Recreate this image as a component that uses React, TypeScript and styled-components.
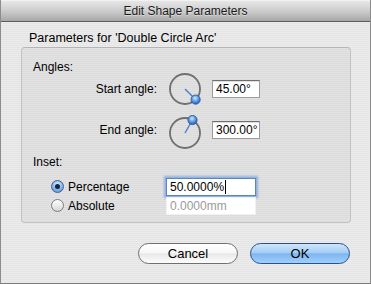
import React from "react";
import styled, { createGlobalStyle, css } from "styled-components";

const GlobalStyle = createGlobalStyle`
  html, body {
    margin: 0;
    padding: 0;
    background: #ffffff;
  }
  body {
    font-family: "Liberation Sans", Arial, sans-serif;
    color: #000;
  }
  * {
    box-sizing: border-box;
  }
`;

const Window = styled.div`
  width: 371px;
  height: 284px;
  display: flex;
  flex-direction: column;
  border-left: 1px solid #8c8c8c;
  border-right: 1px solid #8c8c8c;
  border-bottom: 1px solid #7a7a7a;
  background: repeating-linear-gradient(
    0deg,
    #ebebeb 0px,
    #ebebeb 1px,
    #e5e5e5 1px,
    #e5e5e5 2px
  );
`;

const TitleBar = styled.div`
  height: 22px;
  flex: none;
  border-bottom: 1px solid #5c5c5c;
  border-top: 1px solid #f2f2f2;
  background: linear-gradient(#e6e6e6 0%, #cfcfcf 45%, #a8a8a8 100%);
  display: flex;
  align-items: center;
  justify-content: center;
  font-size: 12px;
  color: #1a1a1a;
  text-shadow: 0 1px 0 rgba(255, 255, 255, 0.45);
`;

const Content = styled.div`
  flex: 1;
  display: flex;
  flex-direction: column;
  padding: 0 19px 0 20px;
`;

const GroupTitle = styled.div`
  margin-top: 9px;
  margin-left: 8px;
  font-size: 12.5px;
  line-height: 15px;
  height: 16px;
`;

const GroupBox = styled.div`
  display: flex;
  flex-direction: column;
  border: 1px solid #c2c2c2;
  border-top-color: #b4b4b4;
  border-radius: 4px;
  background: rgba(0, 0, 0, 0.035);
  padding: 12px 0 7px 11px;
`;

const SectionLabel = styled.div<{ $gap?: number }>`
  font-size: 12px;
  line-height: 14px;
  margin-top: ${({ $gap }) => $gap ?? 0}px;
`;

const AngleGrid = styled.div`
  display: grid;
  grid-template-columns: 124px 55px 48px;
  grid-auto-rows: 30px;
  row-gap: 11px;
  align-items: center;
`;

const AngleLabel = styled.div`
  font-size: 12px;
  text-align: right;
`;

const DialBox = styled.div<{ $shift: number }>`
  width: 36px;
  height: 36px;
  margin-left: 10px;
  transform: translateY(${({ $shift }) => $shift}px);
  svg {
    display: block;
  }
`;

const fieldBase = css`
  height: 18px;
  display: flex;
  align-items: center;
  padding: 0 3px;
  font-size: 12px;
  background: #fff;
`;

const NumberField = styled.div<{ $width: number }>`
  ${fieldBase};
  width: ${({ $width }) => $width}px;
  border: 1px solid #9b9b9b;
  border-top-color: #6e6e6e;
  box-shadow: inset 0 1px 0 #e0e0e0;
`;

const FocusedField = styled.div<{ $width: number }>`
  ${fieldBase};
  width: ${({ $width }) => $width}px;
  border: 1px solid #5a86c8;
  box-shadow: 0 0 0 1px #8fb3e3, 0 0 2px 2px rgba(90, 140, 210, 0.55);
`;

const DisabledField = styled.div<{ $width: number }>`
  ${fieldBase};
  width: ${({ $width }) => $width}px;
  border: 1px solid #f1f1f1;
  color: #9a9a9a;
`;

const Caret = styled.span`
  display: inline-block;
  width: 1px;
  height: 14px;
  background: #000;
  margin-left: 1px;
`;

const InsetGrid = styled.div`
  margin-top: 8px;
  margin-left: 18px;
  display: grid;
  grid-template-columns: 13px 94px 90px;
  column-gap: 4px;
  grid-auto-rows: 19px;
  align-items: center;
`;

const Radio = styled.div<{ $on: boolean }>`
  width: 13px;
  height: 13px;
  border-radius: 50%;
  display: flex;
  align-items: center;
  justify-content: center;
  ${({ $on }) =>
    $on
      ? css`
          border: 1px solid #3f5f94;
          background: radial-gradient(circle at 50% 30%, #d8ecff 0%, #8ebdf0 45%, #4f8ed6 100%);
        `
      : css`
          border: 1px solid #7c7c7c;
          background: linear-gradient(#fdfdfd 0%, #e9e9e9 55%, #d6d6d6 100%);
        `}

  &::after {
    content: "";
    display: ${({ $on }) => ($on ? "block" : "none")};
    width: 5px;
    height: 5px;
    border-radius: 50%;
    background: #17233d;
  }
`;

const RadioLabel = styled.div`
  font-size: 12px;
`;

const ButtonRow = styled.div`
  margin-top: 20px;
  padding-right: 1px;
  display: flex;
  justify-content: flex-end;
  gap: 12px;
`;

const Button = styled.button<{ $primary?: boolean }>`
  width: 100px;
  height: 21px;
  padding: 0;
  border-radius: 11px;
  font-family: "Liberation Sans", Arial, sans-serif;
  font-size: 13px;
  color: #000;
  ${({ $primary }) =>
    $primary
      ? css`
          border: 1px solid #2f4f8c;
          background: linear-gradient(#cfe5fb 0%, #a4cdf6 45%, #7fb6f0 52%, #9fd0fb 100%);
        `
      : css`
          border: 1px solid #6f6f6f;
          background: linear-gradient(#ffffff 0%, #f7f7f7 45%, #e9e9e9 52%, #fcfcfc 100%);
        `}
`;

type DialProps = { angle: number; shift: number };

const Dial: React.FC<DialProps> = ({ angle, shift }) => {
  const rad = (angle * Math.PI) / 180;
  const kx = 18 + 15 * Math.cos(rad);
  const ky = 18 + 15 * Math.sin(rad);
  const id = `knob${angle}`;
  return (
    <DialBox $shift={shift}>
      <svg width="36" height="36" viewBox="0 0 36 36">
        <defs>
          <radialGradient id={id} cx="45%" cy="35%" r="65%">
            <stop offset="0%" stopColor="#d6ecff" />
            <stop offset="45%" stopColor="#6aa6ee" />
            <stop offset="100%" stopColor="#1f5cc4" />
          </radialGradient>
        </defs>
        <circle cx="18" cy="18" r="15.5" fill="none" stroke="#d9d9d9" strokeWidth="1" />
        <circle cx="18" cy="18" r="15" fill="none" stroke="#707070" strokeWidth="1.8" />
        <line x1="18" y1="18" x2={kx} y2={ky} stroke="#4a7fc4" strokeWidth="1.4" />
        <circle cx={kx} cy={ky} r="4.6" fill={`url(#${id})`} stroke="#2c4e8c" strokeWidth="0.8" />
      </svg>
    </DialBox>
  );
};

const App: React.FC = () => {
  return (
    <>
      <GlobalStyle />
      <Window>
        <TitleBar>Edit Shape Parameters</TitleBar>
        <Content>
          <GroupTitle>Parameters for 'Double Circle Arc'</GroupTitle>
          <GroupBox>
            <SectionLabel>Angles:</SectionLabel>
            <AngleGrid>
              <AngleLabel>Start angle:</AngleLabel>
              <Dial angle={45} shift={0} />
              <NumberField $width={48}>45.00°</NumberField>
              <AngleLabel>End angle:</AngleLabel>
              <Dial angle={300} shift={3} />
              <NumberField $width={48}>300.00°</NumberField>
            </AngleGrid>
            <SectionLabel $gap={10}>Inset:</SectionLabel>
            <InsetGrid>
              <Radio $on={true} />
              <RadioLabel>Percentage</RadioLabel>
              <FocusedField $width={90}>
                50.0000%
                <Caret />
              </FocusedField>
              <Radio $on={false} />
              <RadioLabel>Absolute</RadioLabel>
              <DisabledField $width={90}>0.0000mm</DisabledField>
            </InsetGrid>
          </GroupBox>
          <ButtonRow>
            <Button>Cancel</Button>
            <Button $primary>OK</Button>
          </ButtonRow>
        </Content>
      </Window>
    </>
  );
};

export default App;
